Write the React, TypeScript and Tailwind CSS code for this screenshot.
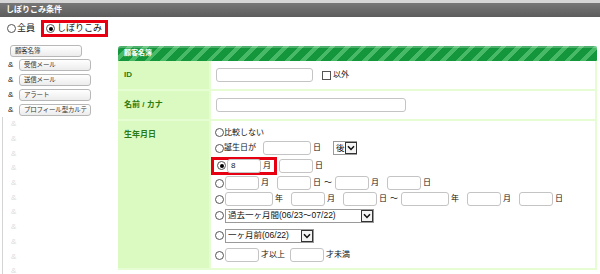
import React from "react";

const FONT = "font-['Liberation_Sans','Noto_Sans_CJK_JP',sans-serif]";

const Radio = ({ checked = false }: { checked?: boolean }) => (
  <span className="flex h-[9px] w-[9px] shrink-0 items-center justify-center rounded-full border border-[#555] bg-white">
    {checked && <span className="h-[4px] w-[4px] rounded-full bg-black" />}
  </span>
);

const Inp = ({ w, value }: { w: number; value?: string }) => (
  <span
    className="flex h-[14px] shrink-0 items-center rounded-[3px] border border-[#c4c4c4] bg-white pl-[3px] text-[8px] text-[#222]"
    style={{ width: w }}
  >
    {value}
  </span>
);

const T = ({ children, mr = 8 }: { children: React.ReactNode; mr?: number }) => (
  <span className="ml-[2px] shrink-0 text-[8px] text-[#111]" style={{ marginRight: mr }}>
    {children}
  </span>
);

const Tilde = () => <span className="mx-[3px] text-[8px] text-[#111]">～</span>;

const Arrow = () => (
  <span className="flex h-[12px] w-[12px] shrink-0 items-center justify-center border border-[#333] bg-[#f4f4f4]">
    <svg width="8" height="6" viewBox="0 0 8 6">
      <path d="M1 1.2 L4 4.5 L7 1.2" fill="none" stroke="#111" strokeWidth="1.5" />
    </svg>
  </span>
);

const Select = ({ w, label }: { w: number; label: string }) => (
  <span
    className="flex h-[14px] shrink-0 items-center justify-between border border-[#9a9a9a] bg-white pl-[2px] text-[8.5px] text-[#111]"
    style={{ width: w }}
  >
    <span className="whitespace-nowrap">{label}</span>
    <Arrow />
  </span>
);

const SideBtn = ({ label, w = 72 }: { label: string; w?: number }) => (
  <span
    className="flex h-[12px] items-center overflow-hidden whitespace-nowrap rounded-[3px] border border-[#b8b8b8] bg-gradient-to-b from-white to-[#ececec] pl-[4px] text-[6.5px] tracking-[-0.2px] text-[#333]"
    style={{ width: w }}
  >
    {label}
  </span>
);

const Row = ({ h, children }: { h: number; children: React.ReactNode }) => (
  <div className="flex items-center pl-[4px]" style={{ height: h }}>
    {children}
  </div>
);

export default function App() {
  const subs = ["受信メール", "送信メール", "アラート", "プロフィール型カルテ"];
  return (
    <div className={`h-[274px] w-[600px] overflow-hidden bg-white ${FONT}`}>
      {/* title bar */}
      <div className="flex h-[17px] items-center border-t-[3px] border-[#d6d6d6] bg-gradient-to-b from-[#777] to-[#5c5c5c] pl-[6px] text-[8px] font-bold text-white">
        しぼりこみ条件
      </div>

      {/* mode radios */}
      <div className="flex h-[23px] items-center pl-[7px] text-[9px] text-[#111]">
        <Radio />
        <span className="ml-[1px]">全員</span>
        <div className="ml-[6px] flex h-[17px] items-center gap-[2px] border-[3px] border-[#e60012] pl-[2px] pr-[3px]">
          <Radio checked />
          <span>しぼりこみ</span>
        </div>
      </div>

      <div className="flex">
        {/* left menu */}
        <div className="flex w-[118px] shrink-0 flex-col pt-[5px] text-[7px] text-[#333]">
          <div className="pl-[10px]">
            <SideBtn label="顧客名簿" />
          </div>
          <div className="flex flex-col">
            {subs.map((s) => (
              <div key={s} className="flex h-[15px] items-center pl-[8px]">
                <span className="w-[11px] text-[8px] text-[#222]">&amp;</span>
                <SideBtn label={s} />
              </div>
            ))}
          </div>
          <div className="ml-[2px] flex flex-col border-l border-[#d4d4d4]">
            {Array.from({ length: 11 }).map((_, i) => (
              <div key={i} className="flex h-[14.7px] items-center pl-[8px] text-[8px] text-[#dcdcdc]">
                &amp;
              </div>
            ))}
          </div>
        </div>

        {/* right table */}
        <div className="mt-[6px] flex w-[479px] shrink-0 flex-col">
          <div className="flex h-[15px] items-center rounded-tl-[3px] rounded-tr-[2px] bg-[repeating-linear-gradient(135deg,#14963c_0px,#14963c_7px,#48b966_7px,#48b966_11px)] pl-[6px] text-[7px] font-bold text-white shadow-[inset_0_2px_0_rgba(255,255,255,0.25)]">
            顧客名簿
          </div>
          <div className="flex flex-col border-r-2 border-b-2 border-[#e6fcd3]">
            {/* ID */}
            <div className="flex h-[30px] border-b-2 border-[#e6fcd3]">
              <div className="flex w-[91px] shrink-0 items-center bg-[#dafac2] pl-[6px] text-[8px] font-bold text-[#2c7a12]">
                ID
              </div>
              <div className="flex flex-1 items-center border-l-2 border-[#e6fcd3] pl-[5px]">
                <Inp w={97} />
                <span className="ml-[9px] h-[9px] w-[9px] border border-[#555] bg-white" />
                <span className="ml-[2px] text-[8px] text-[#111]">以外</span>
              </div>
            </div>
            {/* name */}
            <div className="flex h-[30px] border-b-2 border-[#e6fcd3]">
              <div className="flex w-[91px] shrink-0 items-center bg-[#dafac2] pl-[6px] text-[8px] font-bold text-[#2c7a12]">
                名前 / カナ
              </div>
              <div className="flex flex-1 items-center border-l-2 border-[#e6fcd3] pl-[5px]">
                <Inp w={190} />
              </div>
            </div>
            {/* birthday */}
            <div className="flex h-[147px]">
              <div className="w-[91px] shrink-0 bg-[#dafac2] pl-[6px] pt-[8px] text-[8px] font-bold text-[#2c7a12]">
                生年月日
              </div>
              <div className="flex flex-1 flex-col border-l-2 border-[#e6fcd3] pt-[4px] text-[8px] text-[#111]">
                <Row h={15}>
                  <Radio />
                  <span>比較しない</span>
                </Row>
                <Row h={16}>
                  <Radio />
                  <span className="mr-[7px]">誕生日が</span>
                  <Inp w={48} />
                  <T mr={12}>日</T>
                  <Select w={24} label="後" />
                </Row>
                <div className="flex h-[19px] items-center">
                  <div className="flex h-[18px] items-center border-[3px] border-[#e60012] pl-[3px] pr-[3px]">
                    <Radio checked />
                    <span className="ml-[1px]">
                      <Inp w={34} value="8" />
                    </span>
                    <T mr={0}>月</T>
                  </div>
                  <span className="ml-[2px]" />
                  <Inp w={34} />
                  <T>日</T>
                </div>
                <Row h={16}>
                  <Radio />
                  <span className="ml-[1px]" />
                  <Inp w={34} />
                  <T>月</T>
                  <Inp w={34} />
                  <T mr={0}>日</T>
                  <Tilde />
                  <Inp w={34} />
                  <T>月</T>
                  <Inp w={34} />
                  <T>日</T>
                </Row>
                <Row h={16}>
                  <Radio />
                  <span className="ml-[1px]" />
                  <Inp w={48} />
                  <T>年</T>
                  <Inp w={34} />
                  <T>月</T>
                  <Inp w={34} />
                  <T mr={0}>日</T>
                  <Tilde />
                  <Inp w={48} />
                  <T mr={8}>年</T>
                  <Inp w={34} />
                  <T>月</T>
                  <Inp w={34} />
                  <T>日</T>
                </Row>
                <Row h={17}>
                  <Radio />
                  <span className="ml-[1px]" />
                  <Select w={149} label="過去一ヶ月間(06/23～07/22)" />
                </Row>
                <Row h={23}>
                  <Radio />
                  <span className="ml-[1px]" />
                  <Select w={89} label="一ヶ月前(06/22)" />
                </Row>
                <Row h={16}>
                  <Radio />
                  <span className="ml-[1px]" />
                  <Inp w={34} />
                  <T mr={5}>才以上</T>
                  <Inp w={34} />
                  <T>才未満</T>
                </Row>
              </div>
            </div>
          </div>
        </div>
      </div>
    </div>
  );
}
